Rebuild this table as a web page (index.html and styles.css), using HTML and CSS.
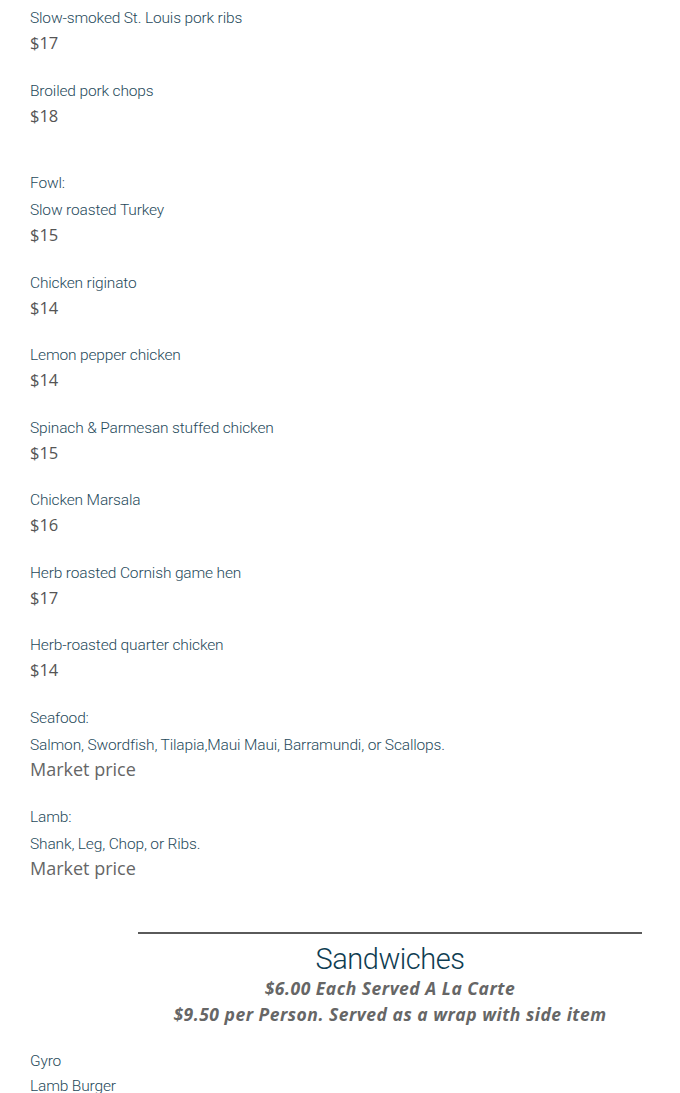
FILE: index.html
```html
<!DOCTYPE html>
<html lang="en">
<head>
<meta charset="utf-8">
<title>Menu</title>
<link rel="stylesheet" href="styles.css">
</head>
<body>
<main class="menu">
  <section class="group">
    <div class="item"><p class="name">Slow-smoked St. Louis pork ribs</p><p class="price">$17</p></div>
    <div class="item"><p class="name">Broiled pork chops</p><p class="price">$18</p></div>
  </section>

  <section class="group group-spaced">
    <p class="heading">Fowl:</p>
    <div class="item"><p class="name">Slow roasted Turkey</p><p class="price">$15</p></div>
    <div class="item"><p class="name">Chicken riginato</p><p class="price">$14</p></div>
    <div class="item"><p class="name">Lemon pepper chicken</p><p class="price">$14</p></div>
    <div class="item"><p class="name">Spinach &amp; Parmesan stuffed chicken</p><p class="price">$15</p></div>
    <div class="item"><p class="name">Chicken Marsala</p><p class="price">$16</p></div>
    <div class="item"><p class="name">Herb roasted Cornish game hen</p><p class="price">$17</p></div>
    <div class="item"><p class="name">Herb-roasted quarter chicken</p><p class="price">$14</p></div>
  </section>

  <section class="group">
    <p class="heading">Seafood:</p>
    <div class="item"><p class="name">Salmon, Swordfish, Tilapia,Maui Maui, Barramundi, or Scallops.</p><p class="market">Market price</p></div>
  </section>

  <section class="group">
    <p class="heading">Lamb:</p>
    <div class="item"><p class="name">Shank, Leg, Chop, or Ribs.</p><p class="market">Market price</p></div>
  </section>

  <header class="section-head">
    <hr class="rule">
    <h2 class="title">Sandwiches</h2>
    <p class="sub">$6.00 Each Served A La Carte</p>
    <p class="sub">$9.50 per Person. Served as a wrap with side item</p>
  </header>

  <section class="list">
    <p class="name list-name">Gyro</p>
    <p class="name list-name">Lamb Burger</p>
  </section>
</main>
</body>
</html>
```

FILE: styles.css
```css
html, body {
  margin: 0;
  padding: 0;
  background: #ffffff;
}

.menu {
  padding: 6px 38px 0 30px;
}

p {
  margin: 0;
}

.group-spaced {
  padding-top: 20px;
}

.item {
  margin-bottom: 23.5px;
}

.name,
.heading {
  font-family: "Roboto", "Liberation Sans", sans-serif;
  font-weight: 300;
  font-size: 15.5px;
  line-height: 24px;
  color: #1f4a5b;
  letter-spacing: -0.15px;
}

.heading {
  margin-bottom: 3px;
}

.price {
  font-family: "Open Sans", "Liberation Sans", sans-serif;
  font-size: 16.5px;
  line-height: 25px;
  color: #555555;
}

.market {
  font-family: "Open Sans", "Liberation Sans", sans-serif;
  font-size: 18px;
  line-height: 25px;
  color: #666666;
}

.section-head {
  margin: 51px 0 0 108px;
  text-align: center;
}

.rule {
  border: 0;
  height: 2px;
  background: #5a5a5a;
  margin: 0 0 7px 0;
}

.title {
  margin: 0 0 -2px 0;
  font-family: "Roboto", "Liberation Sans", sans-serif;
  font-weight: 300;
  font-size: 29px;
  line-height: 36px;
  color: #0f3d52;
  letter-spacing: -0.5px;
}

.sub {
  font-family: "Open Sans", "Liberation Sans", sans-serif;
  font-weight: 700;
  font-style: italic;
  font-size: 17.5px;
  line-height: 26px;
  letter-spacing: 0.5px;
  color: #666666;
}

.list {
  margin-top: 22px;
}

.list-name {
  line-height: 25px;
}
```
